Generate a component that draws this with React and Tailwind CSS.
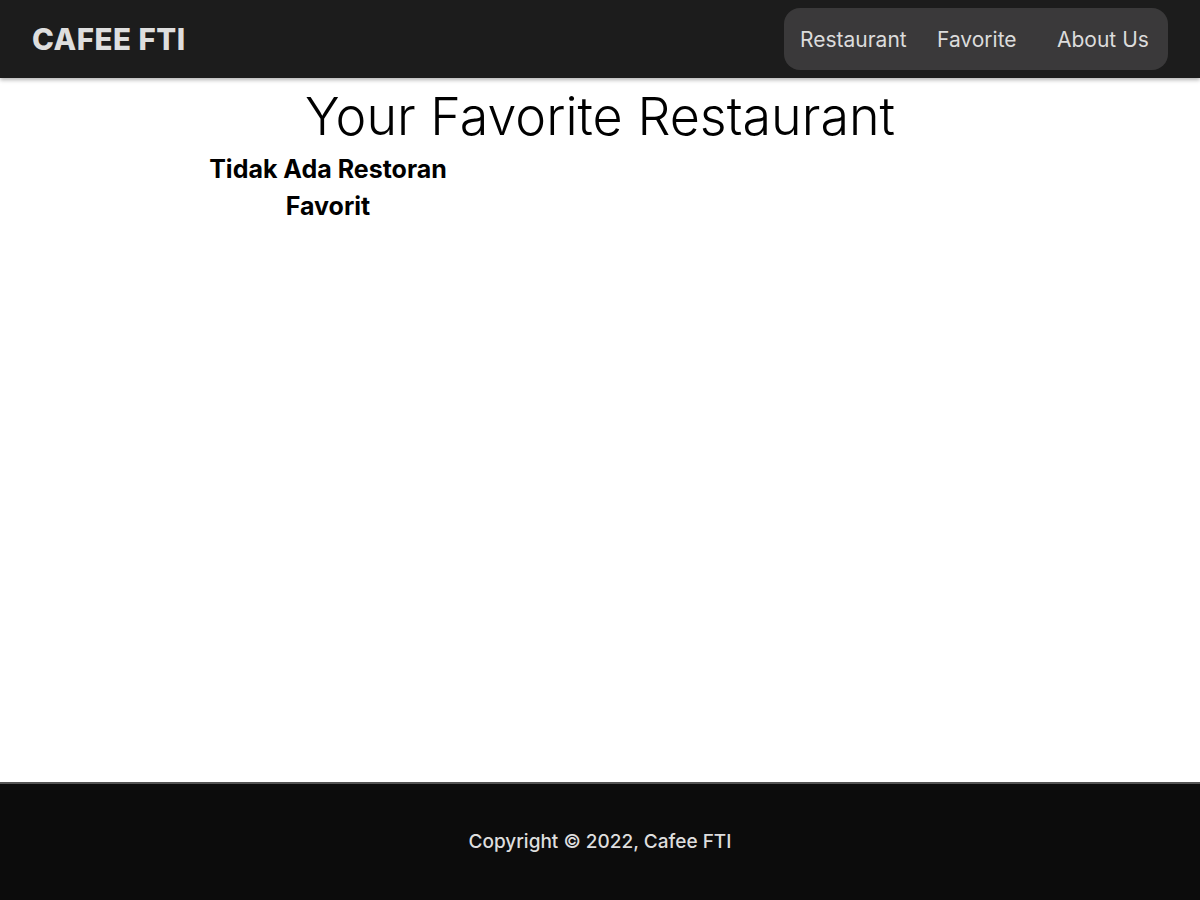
import React from 'react';

const App = () => {
    return (
        <div className="min-h-screen flex flex-col bg-white" style={{ fontFamily: '"Inter", "Open Sans", sans-serif' }}>
            <header className="h-[78px] bg-[#1c1c1c] flex items-center justify-between pl-8 pr-8 shadow-[0_2px_4px_rgba(0,0,0,0.3)] relative z-10">
                <h1 className="text-[29.5px] font-extrabold text-[#dedede] tracking-[0.5px]">CAFEE FTI</h1>
                <nav className="w-[384px] h-[62px] bg-[#3a393a] rounded-[16px] flex items-center pl-[16px] pt-[1px] text-[21px] text-[#dcdcdc]">
                    <a className="w-[137px]" href="#">Restaurant</a>
                    <a className="w-[120px]" href="#">Favorite</a>
                    <a href="#">About Us</a>
                </nav>
            </header>

            <main className="flex-1">
                <h2 className="mt-[3px] text-center text-[52px] font-light text-black leading-[72px]">Your Favorite Restaurant</h2>
                <div className="mx-auto w-[800px] grid grid-cols-3">
                    <p className="w-[264px] -ml-[4px] -mt-[2px] text-center text-[25px] font-bold leading-[37px] text-black">Tidak Ada Restoran Favorit</p>
                </div>
            </main>

            <footer className="h-[118px] bg-[#0c0c0c] border-t-2 border-[#555] flex items-center justify-center">
                <p className="text-[19px] font-medium text-[#dedede]">Copyright © 2022, Cafee FTI</p>
            </footer>
        </div>
    );
};

export default App;
